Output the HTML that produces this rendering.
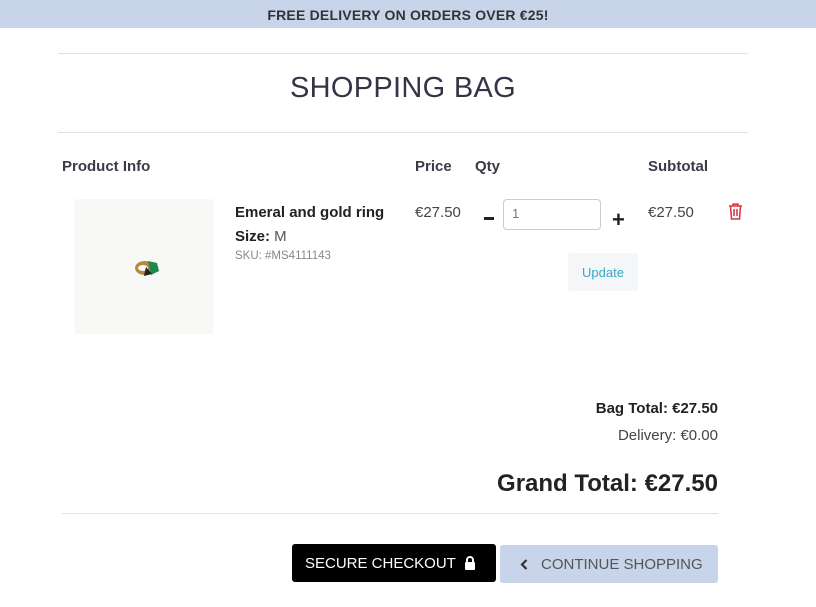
<!DOCTYPE html>
<html><head><meta charset="utf-8"><style>
*{margin:0;padding:0;box-sizing:border-box}
body{width:816px;height:607px;background:#fff;font-family:"Liberation Sans",sans-serif;color:#222;position:relative;overflow:hidden}
.a{position:absolute;white-space:nowrap}
.hr{position:absolute;height:1px;background:#e2e2e2}
.th{font-size:15px;font-weight:bold;color:#3a3a48}
</style></head><body>
<div class="a" style="left:0;top:0;width:816px;height:28px;background:#c8d4ea;text-align:center;font-size:14px;line-height:30px;color:#333;font-weight:bold;letter-spacing:0.2px">FREE DELIVERY ON ORDERS OVER €25!</div>
<div class="hr" style="left:58px;top:53px;width:690px"></div>
<div class="a" style="left:0;width:806px;top:72px;text-align:center;font-size:29px;color:#343447;letter-spacing:0.3px">SHOPPING BAG</div>
<div class="hr" style="left:58px;top:132px;width:690px"></div>
<div class="a th" style="left:62px;top:158px">Product Info</div>
<div class="a th" style="left:415px;top:158px">Price</div>
<div class="a th" style="left:475px;top:158px">Qty</div>
<div class="a th" style="left:648px;top:158px">Subtotal</div>
<div class="a" style="left:74px;top:199px;width:140px;height:135px;background:#f8f8f6;border-radius:3px">
<svg width="140" height="135"><ellipse cx="71" cy="69" rx="10" ry="7" fill="#b48a3a"/><ellipse cx="69" cy="69" rx="5" ry="3" fill="#f8f8f6"/><path d="M74 62 L83 64 L85 72 L77 76 Z" fill="#1c8a4e"/><path d="M72 68 L78 75 L70 77 Z" fill="#222"/></svg></div>
<div class="a" style="left:235px;top:204px;font-size:15px;font-weight:bold;color:#222">Emeral and gold ring</div>
<div class="a" style="left:235px;top:228px;font-size:15px;color:#555"><b style="color:#222">Size:</b> M</div>
<div class="a" style="left:235px;top:250px;font-size:11.5px;color:#888">SKU: #MS4111143</div>
<div class="a" style="left:415px;top:204px;font-size:15px;color:#444">€27.50</div>
<div class="a" style="left:484px;top:217px;width:10px;height:3px;background:#222"></div>
<div class="a" style="left:503px;top:199px;width:98px;height:31px;border:1px solid #ccc;border-radius:4px;font-size:13px;color:#777;padding:6px 8px">1</div>
<div class="a" style="left:612px;top:211px;font-size:22px;font-weight:bold;color:#222;line-height:18px">+</div>
<div class="a" style="left:568px;top:253px;width:70px;height:38px;background:#f4f6f8;border-radius:3px;font-size:13px;color:#38a8c8;text-align:center;line-height:40px">Update</div>
<div class="a" style="left:648px;top:204px;font-size:15px;color:#444">€27.50</div>
<svg class="a" style="left:728px;top:203px" width="15" height="17" viewBox="0 0 15 17"><path d="M1 3h13M5 3V1.2h5V3M2.5 3l1 13h8l1-13M6 6v7M9 6v7" stroke="#dc3545" stroke-width="1.6" fill="none"/></svg>
<div class="a" style="right:98px;top:400px;font-size:15px;font-weight:bold;color:#222">Bag Total: €27.50</div>
<div class="a" style="right:98px;top:427px;font-size:15px;color:#444">Delivery: €0.00</div>
<div class="a" style="right:98px;top:470px;font-size:24px;font-weight:bold;color:#222">Grand Total: €27.50</div>
<div class="hr" style="left:62px;top:513px;width:656px"></div>
<div class="a" style="left:292px;top:544px;width:204px;height:38px;background:#000;border-radius:3px;color:#fff;font-size:15px;line-height:39px;padding-left:13px">SECURE CHECKOUT
<svg style="position:absolute;left:172px;top:12px" width="12" height="14" viewBox="0 0 12 14"><path d="M3 6V4a3 3 0 0 1 6 0v2" stroke="#fff" stroke-width="2" fill="none"/><rect x="1" y="6" width="10" height="8" rx="1" fill="#fff"/></svg></div>
<div class="a" style="left:500px;top:545px;width:218px;height:38px;background:#c8d4ea;border-radius:3px;color:#555;font-size:15px;line-height:39px;padding-left:41px">CONTINUE SHOPPING
<svg style="position:absolute;left:20px;top:14px" width="8" height="11" viewBox="0 0 8 11"><path d="M6.5 1L2 5.5 6.5 10" stroke="#333" stroke-width="2.2" fill="none"/></svg></div>
</body></html>
